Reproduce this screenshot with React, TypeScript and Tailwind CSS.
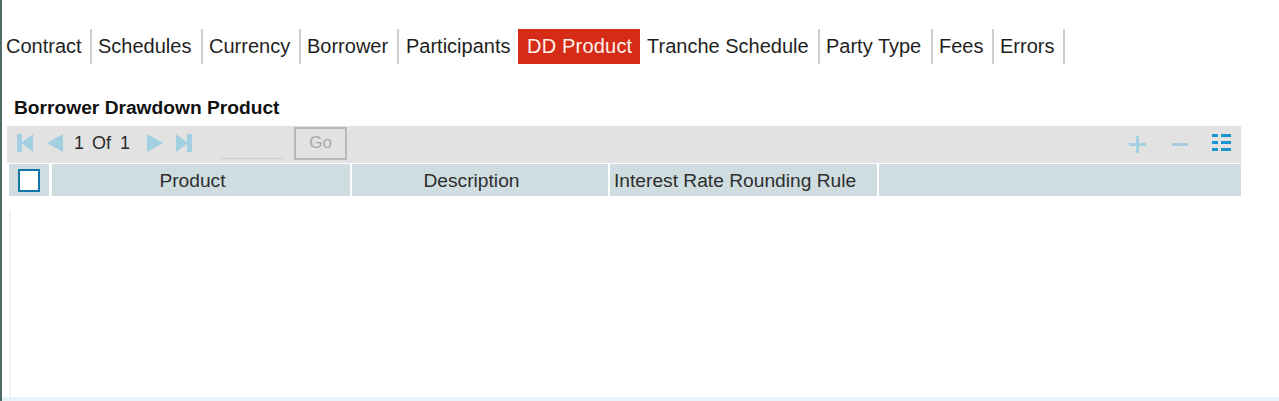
import { FC } from 'react';

const tabs = [
  { label: 'Contract', className: 'w-[86px] border-r-2 border-[#cfcfcf]' },
  { label: 'Schedules', className: 'w-[111px] pl-[6px] border-r-2 border-[#cfcfcf]' },
  { label: 'Currency', className: 'w-[98px] pl-[6px] border-r-2 border-[#cfcfcf]' },
  { label: 'Borrower', className: 'w-[98px] pl-[6px] border-r-2 border-[#cfcfcf]' },
  { label: 'Participants', className: 'w-[119px] pl-[7px]' },
  { label: 'DD Product', className: 'w-[122px] pl-[9px] tracking-[0.2px] bg-[#d52b17] text-[#fdf3ec]' },
  { label: 'Tranche Schedule', className: 'w-[180px] pl-[7px] border-r-2 border-[#cfcfcf]' },
  { label: 'Party Type', className: 'w-[113px] pl-[6px] border-r-2 border-[#cfcfcf]' },
  { label: 'Fees', className: 'w-[61px] pl-[6px] border-r-2 border-[#cfcfcf]' },
  { label: 'Errors', className: 'w-[71px] pl-[6px] border-r-2 border-[#cfcfcf]' },
];

const NavIcon: FC<{ d: string; bar?: 'left' | 'right' }> = ({ d, bar }) => (
  <svg width="16" height="20" viewBox="0 0 16 20" fill="#a3cfe2">
    <path d={d} />
    {bar === 'left' && <rect x="0" y="1" width="5" height="18" />}
    {bar === 'right' && <rect x="11" y="1" width="5" height="18" />}
  </svg>
);

const App: FC = () => {
  return (
    <div className="h-[401px] w-[1279px] overflow-hidden bg-white font-['Liberation_Sans',Arial,sans-serif]">
      <div className="h-full border-l-2 border-[#4f6b68] flex flex-col">
        <div className="flex mt-[29px] h-[35px] pl-[4px] text-[20px] leading-[34px] text-[#1f1f1f]">
          {tabs.map((tab) => (
            <div key={tab.label} className={`${tab.className} h-full whitespace-nowrap`}>
              {tab.label}
            </div>
          ))}
        </div>

        <div className="mt-[34px] ml-[12px] h-[20px] text-[19.2px] leading-[20px] font-bold text-[#111]">
          Borrower Drawdown Product
        </div>

        <div className="mt-[8px] ml-[5px] w-[1234px] h-[37px] bg-[#e2e2e2] flex items-center text-[#2a2a2a] text-[18px]">
          <div className="ml-[10px] mb-[4px] flex items-center">
            <NavIcon d="M4 10 L16 1 V19 Z" bar="left" />
            <span className="ml-[14px]">
              <NavIcon d="M0 10 L16 1 V19 Z" />
            </span>
            <span className="ml-[11px] mt-[2px]">1</span>
            <span className="ml-[8px] mt-[2px]">Of</span>
            <span className="ml-[9px] mt-[2px]">1</span>
            <span className="ml-[17px]">
              <NavIcon d="M16 10 L0 1 V19 Z" />
            </span>
            <span className="ml-[13px]">
              <NavIcon d="M12 10 L0 1 V19 Z" bar="right" />
            </span>
          </div>
          <div className="ml-[29px] mt-[32px] w-[62px] h-[1px] bg-[#cdcdcd] self-start" />
          <div className="ml-[11px] mt-[1px] self-start w-[53px] h-[33px] border-2 border-[#b9b9b9] text-[#a8a8a8] text-[17px] leading-[28px] text-center">
            Go
          </div>
          <div className="ml-auto mr-[10px] flex items-center">
            <svg width="17" height="17" viewBox="0 0 17 17" fill="#a3cfe2">
              <rect x="0" y="7" width="17" height="3" />
              <rect x="7" y="0" width="3" height="17" />
            </svg>
            <svg className="ml-[26px]" width="16" height="17" viewBox="0 0 16 17" fill="#a9cbdc">
              <rect x="0" y="7" width="16" height="3" />
            </svg>
            <svg className="ml-[24px] mb-[4px]" width="19" height="17" viewBox="0 0 19 17" fill="#1b94d0">
              <rect x="0" y="0" width="6" height="3" />
              <rect x="9" y="0" width="10" height="3" />
              <rect x="0" y="7" width="6" height="3" />
              <rect x="9" y="7" width="10" height="3" />
              <rect x="0" y="14" width="6" height="3" />
              <rect x="9" y="14" width="10" height="3" />
            </svg>
          </div>
        </div>

        <div className="mt-[1px] ml-[7px] w-[1232px] h-[32px] flex text-[19.2px] leading-[34px] text-[#2e2e2e]">
          <div className="w-[40px] bg-[#cfdde1] flex items-center justify-center">
            <div className="w-[22px] h-[23px] bg-white border-2 border-[#0f76a8]" />
          </div>
          <div className="ml-[3px] w-[298px] bg-[#cfdde1] text-center pr-[17px]">Product</div>
          <div className="ml-[2px] w-[256px] bg-[#cfdde1] text-center pr-[17px]">Description</div>
          <div className="ml-[2px] w-[267px] bg-[#cfdde1] pl-[4px] whitespace-nowrap">Interest Rate Rounding Rule</div>
          <div className="ml-[2px] flex-1 bg-[#cfdde1]" />
        </div>

        <div className="mt-[14px] ml-[7px] flex-1 border-l-2 border-[#f1f4f6]" />
        <div className="h-[4px] bg-[#e8f3f7]" />
      </div>
    </div>
  );
};

export default App;
